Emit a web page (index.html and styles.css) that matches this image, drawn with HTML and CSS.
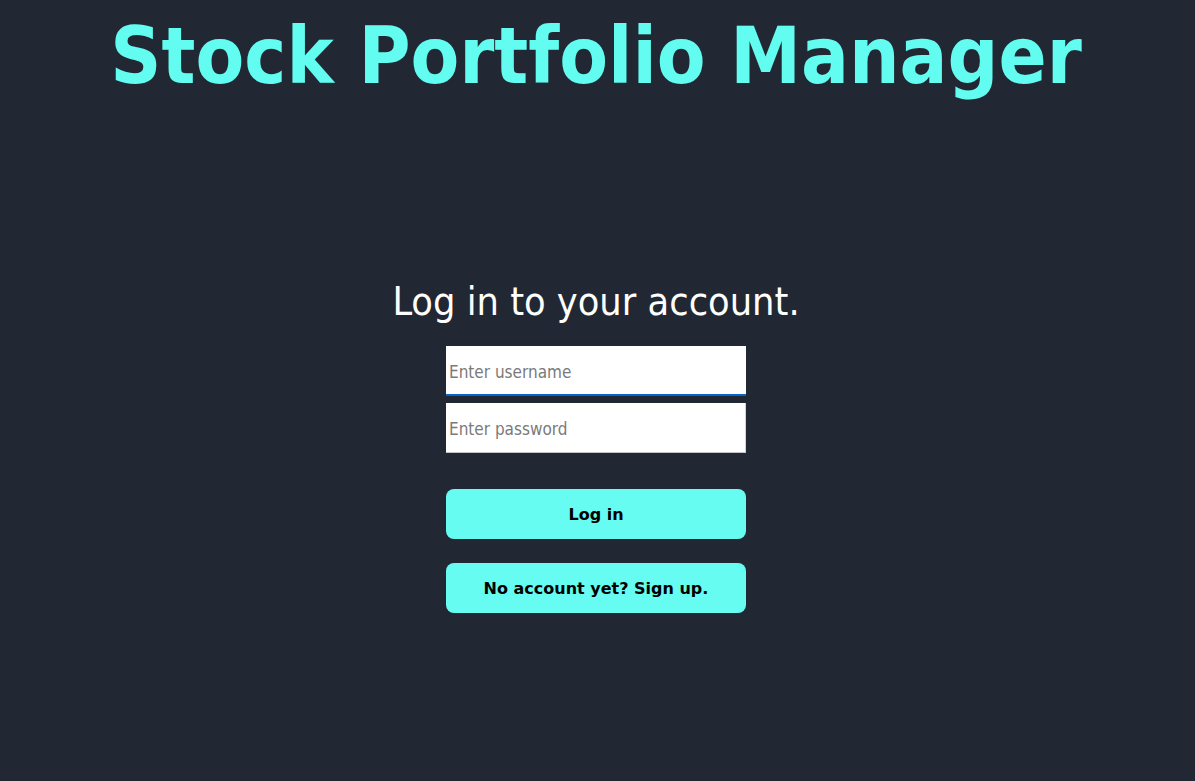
FILE: index.html
```html
<!DOCTYPE html>
<html>
<head>
<meta charset="utf-8">
<link rel="stylesheet" href="styles.css">
</head>
<body>
<h1 class="title">Stock Portfolio Manager</h1>
<main class="login">
  <h2 class="subtitle">Log in to your account.</h2>
  <form class="form">
    <input class="field field-focus" type="text" placeholder="Enter username" autofocus>
    <input class="field" type="password" placeholder="Enter password">
    <button class="btn btn-login" type="button">Log in</button>
    <button class="btn btn-signup" type="button">No account yet? Sign up.</button>
  </form>
</main>
</body>
</html>
```
FILE: styles.css
```css
html, body {
  margin: 0;
  padding: 0;
  background: #212833;
  height: 100%;
}
body {
  box-sizing: border-box;
  padding-right: 3px;
  font-family: "DejaVu Sans Condensed", "DejaVu Sans", sans-serif;
  display: flex;
  flex-direction: column;
  align-items: center;
}
.title {
  margin: 0;
  padding-top: 6px;
  font-size: 79px;
  line-height: 100px;
  font-weight: bold;
  color: #62fcf0;
}
.login {
  margin-top: 171px;
  display: flex;
  flex-direction: column;
  align-items: center;
}
.subtitle {
  margin: 0;
  font-weight: normal;
  font-size: 39.3px;
  line-height: 50px;
  color: #ffffff;
}
.form {
  margin-top: 19px;
  display: flex;
  flex-direction: column;
  width: 300px;
}
.field {
  box-sizing: border-box;
  width: 300px;
  height: 50px;
  margin: 0 0 7px 0;
  border: none;
  border-right: 1px solid #d4d4d4;
  border-bottom: 1px solid #c4c4c4;
  background: #ffffff;
  font-family: inherit;
  font-size: 17px;
  padding: 2px 2px 0 3px;
  outline: none;
  caret-color: #000000;
}
.field::placeholder {
  color: #7a7a7a;
}
.field-focus {
  border-right: none;
  border-bottom: 2px solid #0066cc;
  padding-top: 3px;
}
.btn {
  box-sizing: border-box;
  width: 300px;
  height: 50px;
  border: none;
  border-radius: 8px;
  background: #66fcf1;
  color: #000000;
  font-family: "DejaVu Sans", sans-serif;
  font-size: 16px;
  font-weight: bold;
  cursor: pointer;
}
.btn-login {
  margin-top: 29px;
}
.btn-signup {
  margin-top: 24px;
}
```
